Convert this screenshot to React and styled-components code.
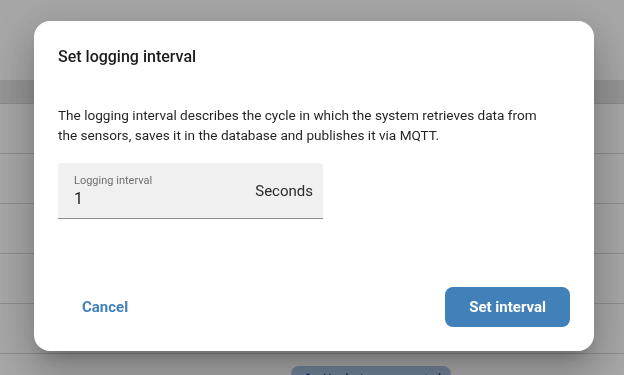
import React from "react";
import styled, { createGlobalStyle } from "styled-components";

const GlobalStyle = createGlobalStyle`
  html, body {
    margin: 0;
    padding: 0;
    height: 100%;
    overflow: hidden;
  }
  body {
    font-family: Roboto, "Liberation Sans", sans-serif;
    background: #ffffff;
  }
`;

const Page = styled.div`
  height: 375px;
  overflow: hidden;
  display: flex;
  flex-direction: column;
  background: #ffffff;
`;

const TopArea = styled.div`
  height: 80px;
  flex-shrink: 0;
`;

const HeaderBand = styled.div`
  height: 23px;
  flex-shrink: 0;
  background: #e3e3e3;
  border-bottom: 1px solid #d5d5d5;
`;

const Row = styled.div`
  height: 49px;
  flex-shrink: 0;
  display: grid;
  grid-template-columns: 291px auto 1fr;
  align-items: start;
  border-bottom: 1px solid #d8d8d8;
`;

const Chip = styled.div`
  margin-top: 12px;
  height: 26px;
  border-radius: 8px;
  background: #a9c3e5;
  display: flex;
  align-items: center;
  gap: 8px;
  padding: 0 10px;
  white-space: nowrap;
  font-size: 12px;
  color: #1c2b40;
`;

const Backdrop = styled.div`
  position: fixed;
  inset: 0;
  background: rgba(0, 0, 0, 0.35);
  display: flex;
  align-items: center;
  justify-content: center;
  padding: 0 0 3px 4px;
`;

const Dialog = styled.div`
  width: 560px;
  box-sizing: border-box;
  padding: 24px;
  background: #ffffff;
  border-radius: 16px;
  display: flex;
  flex-direction: column;
  box-shadow: 0 11px 15px -7px rgba(0, 0, 0, 0.2),
    0 24px 38px 3px rgba(0, 0, 0, 0.14), 0 9px 46px 8px rgba(0, 0, 0, 0.12);
`;

const Title = styled.h2`
  margin: 0;
  font-size: 16px;
  line-height: 24px;
  font-weight: 500;
  color: #1d1d1d;
`;

const Description = styled.p`
  margin: 36px 0 0;
  max-width: 488px;
  font-size: 13.6px;
  line-height: 20px;
  color: rgba(0, 0, 0, 0.87);
`;

const Field = styled.div`
  margin-top: 18px;
  width: 265px;
  height: 56px;
  box-sizing: border-box;
  background: #f0f0f0;
  border-radius: 4px 4px 0 0;
  border-bottom: 1px solid #8f8f8f;
  display: flex;
  align-items: center;
  padding: 0 10px 0 16px;
`;

const FieldMain = styled.div`
  flex: 1;
  display: flex;
  flex-direction: column;
  padding-top: 2px;
`;

const FieldLabel = styled.label`
  font-size: 11px;
  line-height: 14px;
  color: #6f6f6f;
`;

const FieldValue = styled.div`
  font-size: 16px;
  line-height: 21px;
  color: #1f1f1f;
`;

const Adornment = styled.span`
  font-size: 15px;
  color: #2a2a2a;
  margin-top: 1px;
`;

const Actions = styled.div`
  margin-top: 68px;
  display: flex;
  justify-content: space-between;
  align-items: center;
`;

const Button = styled.button`
  height: 40px;
  padding: 0 24px;
  border: none;
  border-radius: 8px;
  font-family: Roboto, "Liberation Sans", sans-serif;
  font-size: 15px;
  font-weight: 700;
  cursor: pointer;
  background: ${props => (props.primary ? "#4180b8" : "transparent")};
  color: ${props => (props.primary ? "#ffffff" : "#4180b8")};
`;

const UsbIcon = () => (
  <svg width="14" height="14" viewBox="0 0 14 14">
    <path d="M7 1 L13 7 L7 13 L1 7 Z" fill="#1f4f96" />
  </svg>
);

const App = () => {
  return (
    <>
      <GlobalStyle />
      <Page>
        <TopArea />
        <HeaderBand />
        <Row />
        <Row />
        <Row />
        <Row />
        <Row />
        <Row>
          <div />
          <Chip>
            <UsbIcon />
            No devices connected
          </Chip>
        </Row>
      </Page>
      <Backdrop>
        <Dialog>
          <Title>Set logging interval</Title>
          <Description>
            The logging interval describes the cycle in which the system
            retrieves data from the sensors, saves it in the database and
            publishes it via MQTT.
          </Description>
          <Field>
            <FieldMain>
              <FieldLabel>Logging interval</FieldLabel>
              <FieldValue>1</FieldValue>
            </FieldMain>
            <Adornment>Seconds</Adornment>
          </Field>
          <Actions>
            <Button>Cancel</Button>
            <Button primary>Set interval</Button>
          </Actions>
        </Dialog>
      </Backdrop>
    </>
  );
};

export default App;
